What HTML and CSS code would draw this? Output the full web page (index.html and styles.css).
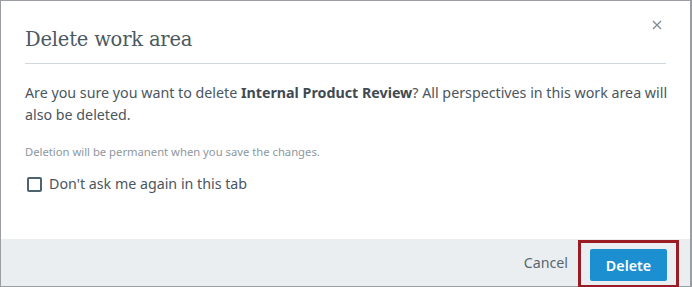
FILE: index.html
```html
<!DOCTYPE html>
<html lang="en">
<head>
  <meta charset="UTF-8">
  <title>Delete work area</title>
  <link rel="stylesheet" href="styles.css">
</head>
<body>
  <div class="modal">
    <div class="modal-body">
      <div class="modal-header">
        <h2>Delete work area</h2>
        <button class="close-btn" aria-label="Close">
          <svg width="10" height="10" viewBox="0 0 10 10">
            <path d="M1 1L9 9M9 1L1 9" stroke="#7d8b93" stroke-width="1.3" fill="none"/>
          </svg>
        </button>
      </div>
      <p class="message">Are you sure you want to delete <strong>Internal Product Review</strong>? All perspectives in this work area will also be deleted.</p>
      <p class="note">Deletion will be permanent when you save the changes.</p>
      <label class="check">
        <span class="box"></span>
        Don't ask me again in this tab
      </label>
    </div>
    <div class="modal-footer">
      <button class="cancel-btn">Cancel</button>
      <div class="highlight">
        <button class="delete-btn">Delete</button>
      </div>
    </div>
  </div>
</body>
</html>
```

FILE: styles.css
```css
html, body {
  margin: 0;
  height: 100%;
}

body {
  font-family: 'Noto Sans', sans-serif;
  background: #fff;
  color: #4a5660;
}

.modal {
  box-sizing: border-box;
  height: 287px;
  border: 1px solid #9a9ea2;
  border-right-width: 2px;
  display: flex;
  flex-direction: column;
}

.modal-body {
  flex: 1;
  padding: 0 24px 0 24px;
}

.modal-header {
  display: flex;
  justify-content: space-between;
  align-items: flex-start;
  border-bottom: 1px solid #cfd8dc;
  padding-top: 27px;
  height: 35px;
}

.modal-header h2 {
  margin: 0;
  font-family: 'DejaVu Serif', serif;
  font-weight: normal;
  font-size: 19.5px;
  line-height: 24px;
  color: #4b5961;
  letter-spacing: -0.2px;
}

.close-btn {
  border: none;
  background: none;
  padding: 0;
  margin: -8px 4px 0 0;
  cursor: pointer;
  line-height: 0;
}

.message {
  margin: 18px -10px 0 0;
  font-size: 14.25px;
  line-height: 22px;
}

.message strong {
  font-weight: bold;
  color: #3f4a52;
}

.note {
  margin: 19px 0 0;
  font-size: 11.25px;
  line-height: 14px;
  color: #8d979e;
}

.check {
  display: flex;
  align-items: center;
  gap: 7px;
  margin-top: 16px;
  margin-left: 2px;
  font-size: 14.25px;
  line-height: 18px;
}

.box {
  box-sizing: border-box;
  width: 15px;
  height: 15px;
  border: 2px solid #4d6470;
  border-radius: 2px;
}

.modal-footer {
  height: 47px;
  background: #ebeef1;
  display: flex;
  justify-content: flex-end;
  align-items: center;
  padding-right: 11px;
}

.cancel-btn {
  border: none;
  background: none;
  font-family: 'Noto Sans', sans-serif;
  font-size: 14.25px;
  color: #5a666e;
  padding: 0;
  margin-right: 10px;
  cursor: pointer;
}

.highlight {
  box-sizing: border-box;
  height: 48px;
  margin-top: 1px;
  align-self: flex-start;
  border: 3px solid #9b1b25;
  padding: 6px 9px 0 9px;
}

.delete-btn {
  width: 77px;
  height: 32px;
  border: none;
  border-radius: 2px;
  background: #1b8fd0;
  color: #fff;
  font-family: 'Noto Sans', sans-serif;
  font-size: 14.25px;
  font-weight: 600;
  cursor: pointer;
}
```
